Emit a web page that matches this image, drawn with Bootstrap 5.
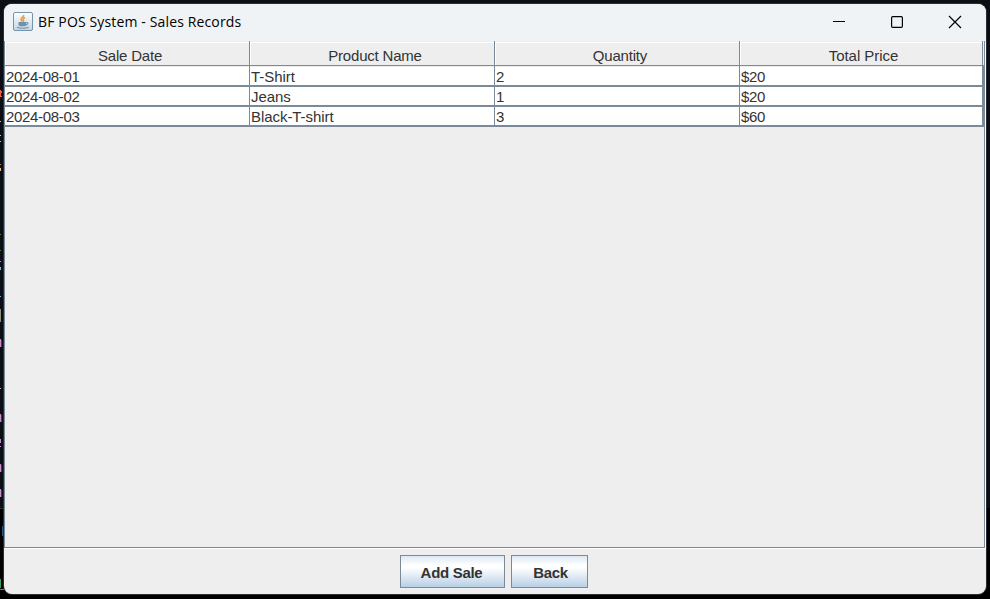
<!DOCTYPE html>
<html lang="en">
<head>
<meta charset="utf-8">
<title>BF POS System - Sales Records</title>
<link href="https://cdn.jsdelivr.net/npm/bootstrap@5.3.0/dist/css/bootstrap.min.css" rel="stylesheet">
<style>
:root { --line: #7a8a99; }
body { width: 990px; height: 599px; background: linear-gradient(#0b0e14 0 508px, #000 508px); font-family: "Liberation Sans", Arial, sans-serif; padding: 4px 4px 5px 4px; }
.app-window { width: 982px; height: 590px; background: #eee; border-radius: 8px; box-shadow: 0 0 0 1px #2b2e33; }
.titlebar { height: 37px; background: #f0f3f5; padding: 0 24px 2px 9px; }
.app-icon { margin-top: 1px; }
.win-title { font: 14px/20px "Open Sans", sans-serif; color: #000; margin-left: 5px; white-space: nowrap; letter-spacing: .14px; }
.win-controls { gap: 44px; }
.records { height: 507px; width: 981px; border: 1px solid var(--line); border-top: 0; box-shadow: 1px 1px 0 #fff; }
.grid-table { width: 979px; table-layout: fixed; border-collapse: separate; border-spacing: 0; color: #333; font-size: 15px; }
.grid-table th { height: 25px; padding: 4px 0 0 6px; line-height: 19px; font-weight: 400; text-align: center; letter-spacing: -.2px; background: linear-gradient(#eee 1px, #fff 1px 2px, #eee 2px); border-right: 1px solid var(--line); border-bottom: 1px solid var(--line); box-shadow: inset 1px 0 0 #fff; }
.grid-table th:last-child { border-right: 0; position: relative; padding-left: 3px; letter-spacing: -.05px; }
.grid-table th:last-child::after { content: ""; position: absolute; right: 1px; top: 0; bottom: 0; width: 1px; background: var(--line); }
.grid-table td { height: 20px; padding: 1px 0 0 1px; line-height: 17px; background: #fff; border-right: 1px solid var(--line); border-bottom: 2px solid var(--line); white-space: nowrap; letter-spacing: -.06px; }
.grid-table td:first-child { letter-spacing: -.33px; }
.grid-table td:last-child { border-right-width: 2px; letter-spacing: -.3px; }
.grid-table tbody tr:first-child td { height: 21px; padding-top: 2px; box-shadow: inset 0 1px 0 #eee; }
.actions { height: 46px; padding: 7px 2px 0 0; gap: 6px; }
.metal-btn { --bs-btn-padding-x: 0; --bs-btn-padding-y: 0; height: 33px; font-size: 15px; font-weight: 700; line-height: 31px; color: #333; border: 1px solid var(--line); border-radius: 0; background: linear-gradient(#dde8f3 0, #fff 30%, #fff 38%, #b8cfe5 100%); padding: 1px 0 0; }
.metal-btn:hover { color: #333; border-color: var(--line); }
.w-add { width: 105px; letter-spacing: -.3px; padding-right: 2px; }
.w-back { width: 77px; letter-spacing: -.3px; padding-left: 2px; }
.backdrop-bits { position: absolute; left: 0; top: 0; }
</style>
<script src="https://cdn.jsdelivr.net/npm/bootstrap@5.3.0/dist/js/bootstrap.bundle.min.js"></script>
</head>
<body class="overflow-hidden m-0">
<svg class="backdrop-bits" width="4" height="599" aria-hidden="true">
<path d="M0 90h1v7H0zM1 91h1v2H1zM1 96h1v1H1z" fill="#ef5a4a"/>
<path d="M0 121h1v1H0zM0 135h1v1H0zM0 141h1v1H0zM0 168h1v3H0z" fill="#d8c49a"/>
<path d="M0 164h1v1H0z" fill="#d07030"/><path d="M0 234h1v1H0zM0 250h1v1H0z" fill="#4a8a30"/>
<path d="M0 261h1v1H0zM0 267h1v3H0zM0 296h1v1H0z" fill="#7ab6d8"/><path d="M0 309h1v13H0z" fill="#8f8f75"/>
<path d="M0 339h1v8H0zM0 414h1v8H0zM0 439h1v4H0zM0 446h1v1H0zM0 464h1v8H0zM0 489h1v8H0z" fill="#c98acb"/>
<path d="M1 340h1v7H1zM1 415h1v7H1zM1 465h1v7H1zM1 490h1v7H1z" fill="#6a3040"/>
<path d="M0 388h1v1H0z" fill="#bbb"/><path d="M0 508h4v1H0z" fill="#303238"/><path d="M2 526h2v10H2z" fill="#245a80"/>
<path d="M0 579h1v9H0z" fill="#35a060"/><path d="M0 589h4v1H0z" fill="#20a5b0"/>
</svg>
<main class="app-window position-relative d-flex flex-column">
<header class="titlebar d-flex align-items-center rounded-top-3">
<svg class="app-icon" width="20" height="20" viewBox="0 0 20 20" aria-hidden="true">
<defs><linearGradient id="tile" x2="0" y2="1"><stop stop-color="#fff"/><stop offset="1" stop-color="#c4d4df"/></linearGradient></defs>
<rect x=".5" y=".5" width="19" height="18" rx="1.5" fill="url(#tile)" stroke="#7593aa"/>
<path d="M10.600 3c.8 2-3 2.600-2.600 4.300.1.900 1 1.500 1.400 2.300M12 5.500c-1.500.9-2.300 1.500-1.600 2.500.5.700.3 1.200-.3 1.700" fill="none" stroke="#ef9440" stroke-width="1.500"/>
<path d="M5.500 10h7.800v2.500c0 1-.8 1.700-1.900 1.700h-4c-1.100 0-1.900-.7-1.900-1.700z" fill="#6b91ad"/>
<path d="M13.200 10.500c2.500-.4 2.200 2-.4 2.400M4 15.300c3 1.300 8.500 1.300 11.500 0" fill="none" stroke="#6b91ad" stroke-width="1.100"/>
</svg>
<span class="win-title">BF POS System - Sales Records</span>
<div class="win-controls d-flex align-items-center ms-auto">
<svg width="14" height="14" aria-hidden="true"><path d="M1 6.500h12" stroke="#000"/></svg>
<svg width="14" height="14" aria-hidden="true"><rect x="1.600" y="1.600" width="10.800" height="10.800" rx="1.200" fill="none" stroke="#000" stroke-width="1.200"/></svg>
<svg width="14" height="14" aria-hidden="true"><path d="M1 1l12 12M13 1L1 13" stroke="#000" stroke-width="1.200"/></svg>
</div>
</header>
<section class="records">
<table class="grid-table">
<colgroup><col style="width:245px"><col style="width:245px"><col style="width:245px"><col style="width:244px"></colgroup>
<thead><tr><th>Sale Date</th><th>Product Name</th><th>Quantity</th><th>Total Price</th></tr></thead>
<tbody>
<tr><td>2024-08-01</td><td>T-Shirt</td><td>2</td><td>$20</td></tr>
<tr><td>2024-08-02</td><td>Jeans</td><td>1</td><td>$20</td></tr>
<tr><td>2024-08-03</td><td>Black-T-shirt</td><td>3</td><td>$60</td></tr>
</tbody>
</table>
</section>
<footer class="actions d-flex justify-content-center align-items-start">
<button type="button" class="btn metal-btn w-add">Add Sale</button>
<button type="button" class="btn metal-btn w-back">Back</button>
</footer>
</main>
</body>
</html>
